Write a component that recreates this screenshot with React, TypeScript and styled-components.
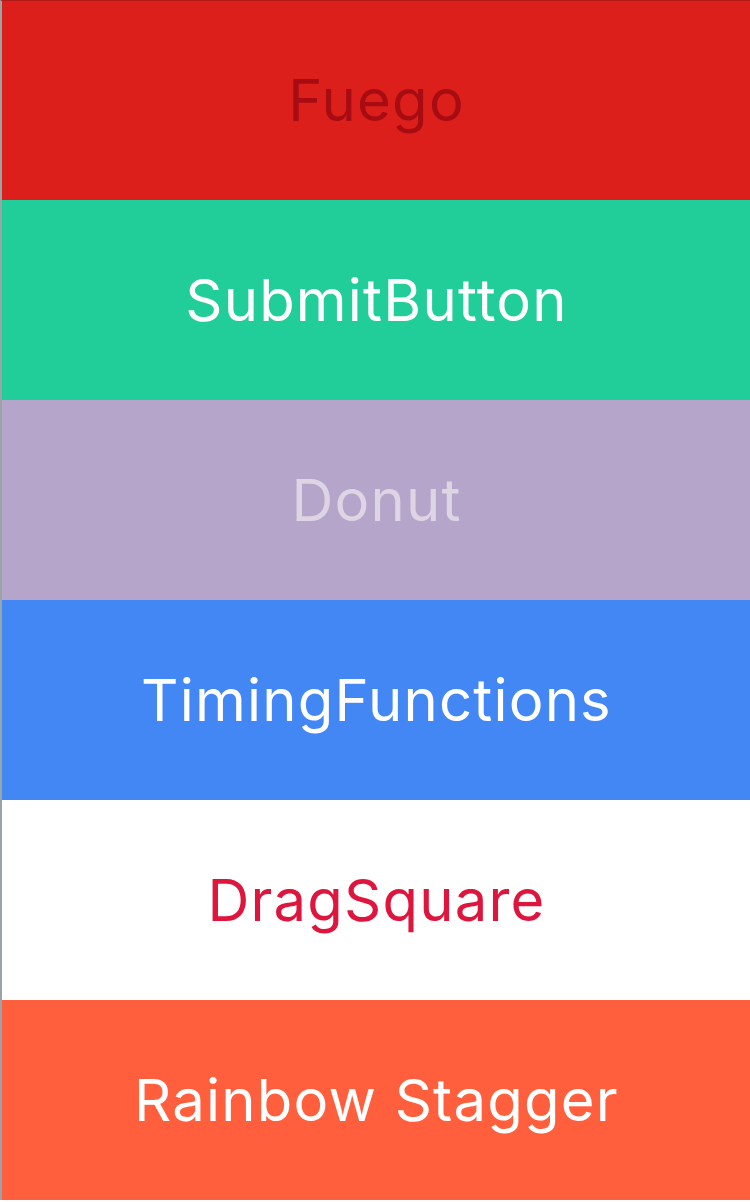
import React from "react";
import styled, { createGlobalStyle } from "styled-components";

const Global = createGlobalStyle`
  html, body { margin: 0; padding: 0; background: #ffffff; }
  body { font-family: Inter, "Noto Sans", sans-serif; }
`;

const List = styled.div`
  display: flex;
  flex-direction: column;
  border-left: 2px solid #9aa3a6;
  border-top: 1px solid #b01a18;
`;

const Row = styled.div<{ $bg: string; $fg: string }>`
  height: 200px;
  display: flex;
  align-items: center;
  justify-content: center;
  background: ${(p) => p.$bg};
  color: ${(p) => p.$fg};
  font-size: 58px;
  letter-spacing: 1.2px;
  line-height: 1;
  padding-bottom: 1px;
  padding-left: 1px;
  box-sizing: border-box;
  &:first-child { height: 199px; }
`;

const items = [
  { label: "Fuego", bg: "#dd1f1b", fg: "#a60c12" },
  { label: "SubmitButton", bg: "#21cd98", fg: "#ffffff" },
  { label: "Donut", bg: "#b5a5ca", fg: "#ddd5e3" },
  { label: "TimingFunctions", bg: "#4387f5", fg: "#ffffff" },
  { label: "DragSquare", bg: "#ffffff", fg: "#de163e" },
  { label: "Rainbow Stagger", bg: "#ff5f3c", fg: "#ffffff" },
];

export default function App() {
  return (
    <>
      <Global />
      <List>
        {items.map((it) => (
          <Row key={it.label} $bg={it.bg} $fg={it.fg}>
            {it.label}
          </Row>
        ))}
      </List>
    </>
  );
}
